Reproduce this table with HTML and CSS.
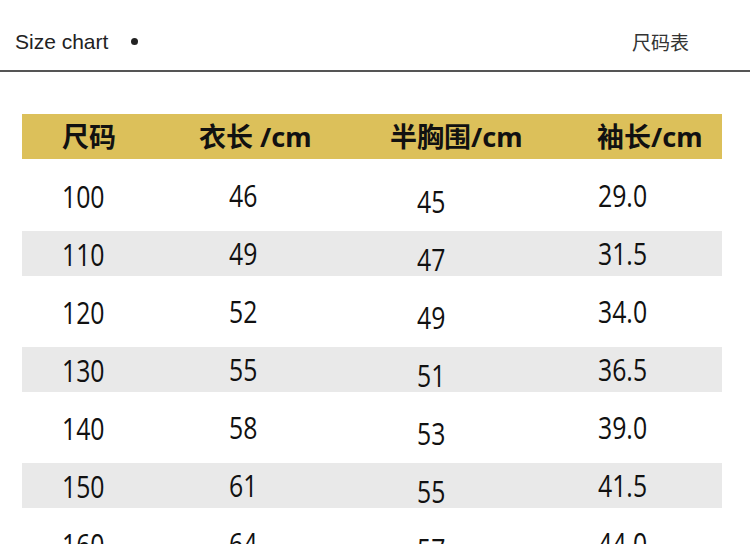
FILE: index.html
```html
<!DOCTYPE html>
<html lang="zh">
<head>
<meta charset="utf-8">
<title>Size chart</title>
<link rel="stylesheet" href="styles.css">
</head>
<body>
<header class="topbar">
  <div class="title">
    <span class="title-en">Size chart</span>
    <span class="dot"></span>
  </div>
  <span class="title-cn">尺码表</span>
</header>
<main class="chart">
  <div class="row head">
    <div class="c c1">尺码</div>
    <div class="c c2">衣长 /cm</div>
    <div class="c c3">半胸围/cm</div>
    <div class="c c4">袖长/cm</div>
  </div>
  <div class="row"><div class="c c1"><span class="n">100</span></div><div class="c c2"><span class="n">46</span></div><div class="c c3"><span class="n">45</span></div><div class="c c4"><span class="n">29.0</span></div></div>
  <div class="row alt"><div class="c c1"><span class="n">110</span></div><div class="c c2"><span class="n">49</span></div><div class="c c3"><span class="n">47</span></div><div class="c c4"><span class="n">31.5</span></div></div>
  <div class="row"><div class="c c1"><span class="n">120</span></div><div class="c c2"><span class="n">52</span></div><div class="c c3"><span class="n">49</span></div><div class="c c4"><span class="n">34.0</span></div></div>
  <div class="row alt"><div class="c c1"><span class="n">130</span></div><div class="c c2"><span class="n">55</span></div><div class="c c3"><span class="n">51</span></div><div class="c c4"><span class="n">36.5</span></div></div>
  <div class="row"><div class="c c1"><span class="n">140</span></div><div class="c c2"><span class="n">58</span></div><div class="c c3"><span class="n">53</span></div><div class="c c4"><span class="n">39.0</span></div></div>
  <div class="row alt"><div class="c c1"><span class="n">150</span></div><div class="c c2"><span class="n">61</span></div><div class="c c3"><span class="n">55</span></div><div class="c c4"><span class="n">41.5</span></div></div>
  <div class="row"><div class="c c1"><span class="n">160</span></div><div class="c c2"><span class="n">64</span></div><div class="c c3"><span class="n">57</span></div><div class="c c4"><span class="n">44.0</span></div></div>
</main>
</body>
</html>
```
FILE: styles.css
```css
* { box-sizing: border-box; }
html, body { margin: 0; padding: 0; background: #fff; }
body {
  width: 750px;
  height: 544px;
  overflow: hidden;
  font-family: "Liberation Sans", Arial, sans-serif;
  color: #111;
}
.topbar {
  height: 72px;
  display: flex;
  align-items: flex-start;
  justify-content: space-between;
  padding: 29px 61px 0 15px;
  border-bottom: 2px solid #555;
}
.title { display: flex; align-items: center; }
.title-en {
  font-size: 21px;
  line-height: 26px;
  color: #222;
}
.dot {
  width: 7px;
  height: 7px;
  border-radius: 50%;
  background: #222;
  margin-left: 23px;
  margin-top: -1px;
}
.title-cn {
  font-family: "Noto Sans CJK SC", sans-serif;
  font-size: 19px;
  line-height: 26px;
  color: #333;
}
.chart {
  padding: 42px 28px 0 22px;
  display: flex;
  flex-direction: column;
  gap: 13px;
}
.row {
  height: 45px;
  flex: none;
  display: grid;
  grid-template-columns: 170px 190px 208px 1fr;
  font-family: "Open Sans", sans-serif;
  font-size: 31px;
  line-height: 45px;
  color: #111;
}
.n {
  display: inline-block;
  transform: scaleX(0.8);
  transform-origin: left center;
}
.row.head {
  background: #dcc05a;
  font-family: "Noto Sans", "Noto Sans CJK SC", sans-serif;
  font-weight: 700;
  font-size: 27px;
  color: #111;
  margin-bottom: 1px;
}
.row.alt { background: #e9e9e9; }
.c { white-space: nowrap; }
.c1 { padding-left: 40px; padding-top: 1px; }
.c2 { padding-left: 37px; }
.c3 { padding-left: 35px; padding-top: 6px; }
.c4 { padding-left: 8px; }
.head .c { padding-top: 0; line-height: 45px; }
.head .c1 { padding-left: 40px; }
.head .c2 { padding-left: 7px; }
.head .c3 { padding-left: 8px; }
.head .c4 { padding-left: 7px; }
```
